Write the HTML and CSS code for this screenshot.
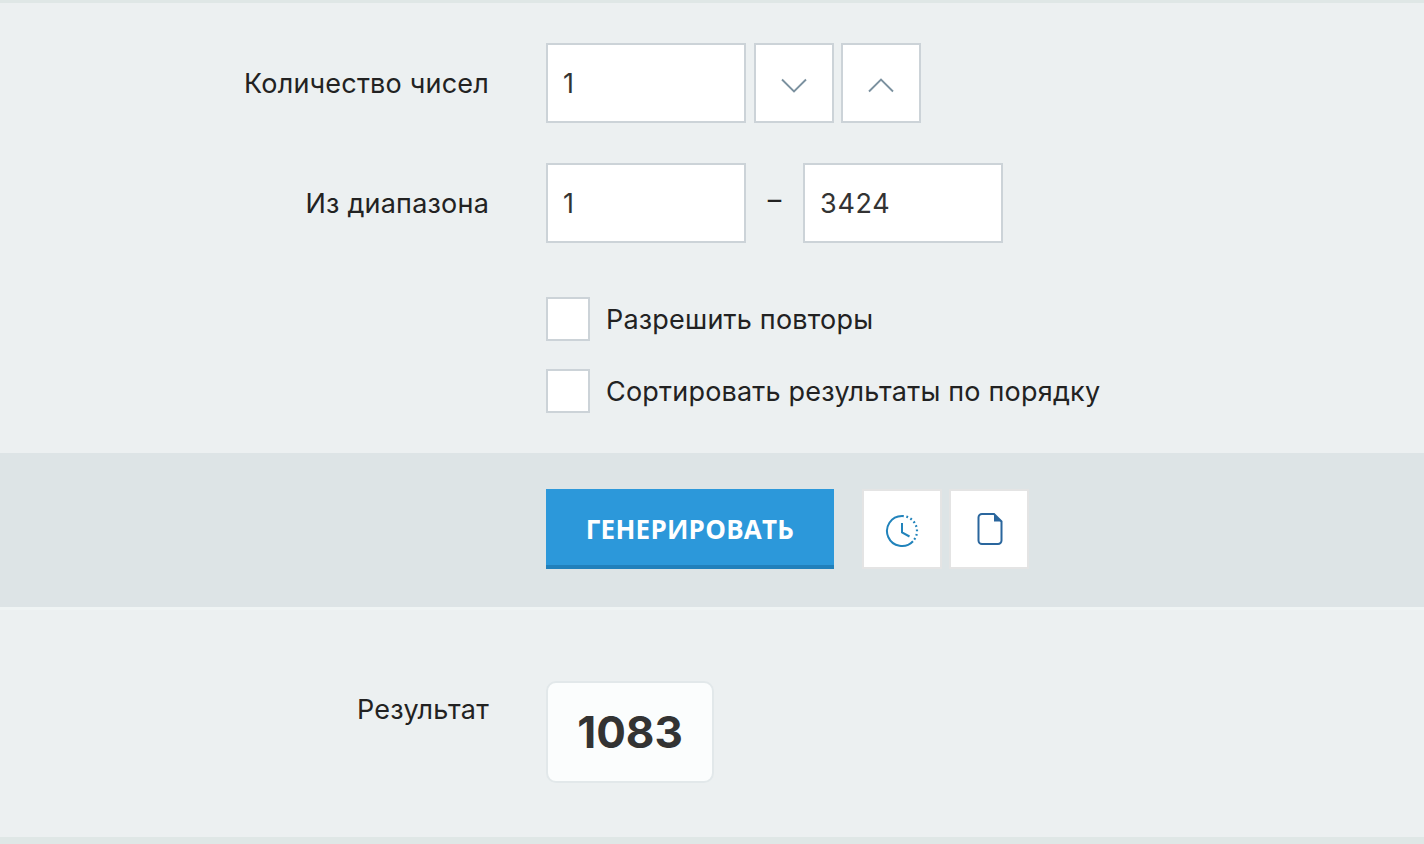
FILE: index.html
```html
<!DOCTYPE html>
<html lang="ru">
<head>
<meta charset="utf-8">
<title>Генератор чисел</title>
<link rel="stylesheet" href="styles.css">
</head>
<body>
<main class="page">
  <section class="form">
    <div class="row row-count">
      <label class="label">Количество чисел</label>
      <div class="controls">
        <div class="input">1</div>
        <button class="step" type="button"><svg width="28" height="15" viewBox="0 0 28 15"><path d="M2 1.500 14 13.500 26 1.500" fill="none" stroke="#7b919f" stroke-width="1.900"/></svg></button>
        <button class="step" type="button"><svg width="28" height="15" viewBox="0 0 28 15"><path d="M2 13.500 14 1.500 26 13.500" fill="none" stroke="#7b919f" stroke-width="1.900"/></svg></button>
      </div>
    </div>
    <div class="row row-range">
      <label class="label">Из диапазона</label>
      <div class="controls">
        <div class="input">1</div>
        <span class="dash">–</span>
        <div class="input">3424</div>
      </div>
    </div>
    <div class="checks">
      <div class="check"><span class="box"></span><span class="check-text">Разрешить повторы</span></div>
      <div class="check"><span class="box"></span><span class="check-text">Сортировать результаты по порядку</span></div>
    </div>
  </section>
  <section class="actions">
    <button class="generate" type="button">ГЕНЕРИРОВАТЬ</button>
    <div class="tools">
      <button class="tool tool-clock" type="button"><svg width="34" height="34" viewBox="0 0 34 34"><path d="M17 2A15 15 0 1 0 28 27.200" fill="none" stroke="#2183bb" stroke-width="2"/><path d="M17 9V18.500L24.500 22.500" fill="none" stroke="#2183bb" stroke-width="2"/><path d="M17 2A15 15 0 0 1 28 27.200" fill="none" stroke="#2183bb" stroke-width="2.200" stroke-dasharray="1.800 2.600"/></svg></button>
      <button class="tool tool-doc" type="button"><svg width="28" height="34" viewBox="0 0 28 34"><path d="M18 2H6A3.500 3.500 0 0 0 2.500 5.500V28.500A3.500 3.500 0 0 0 6 32H22A3.500 3.500 0 0 0 25.500 28.500V9.500Z" fill="none" stroke="#2a669d" stroke-width="2"/><path d="M18 2V9.500H25.500Z" fill="#2a669d"/></svg></button>
    </div>
  </section>
  <section class="result">
    <div class="label">Результат</div>
    <div class="value">1083</div>
  </section>
</main>
</body>
</html>
```

FILE: styles.css
```css
* { box-sizing: border-box; }
html, body { margin: 0; padding: 0; }
body { background: #ecf0f1; color: #222; font-family: Inter, "Noto Sans", sans-serif; font-size: 27px; letter-spacing: .2px; overflow: hidden; }
.page { height: 844px; border-top: 3px solid #dfe7e6; border-bottom: 7px solid #dfe7e6; display: flex; flex-direction: column; }
.form { height: 450px; padding-top: 40px; background: #ecf0f1; }
.row { display: flex; align-items: center; height: 80px; margin-bottom: 40px; }
.label { width: 489px; margin-right: 57px; padding-top: 2px; text-align: right; flex: none; line-height: 34px; }
.controls { display: flex; align-items: center; }
.input { width: 200px; height: 80px; background: #fff; border: 2px solid #ccd3d8; padding-left: 15px; line-height: 78px; color: #333; letter-spacing: .7px; }
.row-count .input { margin-right: 8px; }
.step { width: 80px; height: 80px; background: #fff; border: 2px solid #ccd3d8; padding: 5px 0 0; margin: 0 7px 0 0; display: flex; align-items: center; justify-content: center; }
.dash { width: 57px; text-align: center; padding-bottom: 8px; }
.checks { margin: 54px 0 0 546px; display: flex; flex-direction: column; gap: 28px; }
.check { display: flex; align-items: center; height: 44px; }
.box { width: 44px; height: 44px; background: #fff; border: 2px solid #ccd3d8; margin-right: 16px; flex: none; }
.actions { height: 154px; background: #dde4e6; padding: 36px 0 0 546px; display: flex; align-items: flex-start; }
.generate { width: 288px; height: 80px; background: #2c98da; border: 0; border-bottom: 4px solid #2180bb; color: #fff; font: 700 26px "Open Sans", sans-serif; letter-spacing: .25px; padding: 4px 0 0; margin-right: 28px; }
.tools { display: flex; gap: 7px; }
.tool { width: 80px; height: 80px; background: #fff; border: 2px solid #e4e4e4; padding: 0; display: flex; align-items: center; justify-content: center; }
.tool-clock { padding-top: 4px; }
.tool-doc { padding-left: 2px; }
.result { border-top: 3px solid #eff4f4; flex: 1; padding-top: 71px; display: flex; align-items: flex-start; }
.result .label { margin-top: 10px; }
.value { width: 168px; height: 102px; background: #fbfdfd; border: 2px solid #e2e8ea; border-radius: 10px; display: flex; align-items: center; justify-content: center; font-size: 44px; font-weight: 700; color: #333; letter-spacing: 0; }
```
